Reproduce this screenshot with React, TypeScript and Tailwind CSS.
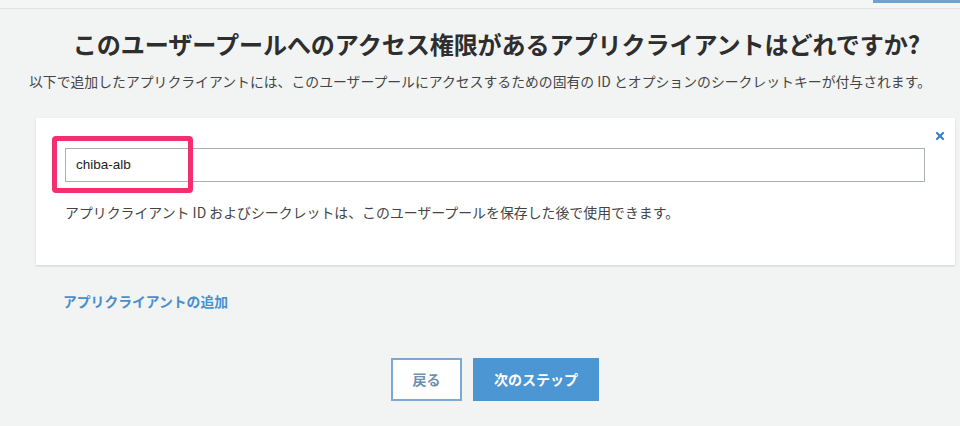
import { X } from 'lucide-react';

const font = { fontFamily: '"Noto Sans CJK JP", "Noto Sans", sans-serif' };

export default function App() {
  return (
    <div
      className="w-[960px] h-[426px] overflow-hidden bg-[#f2f4f4] text-[#333]"
      style={font}
    >
      <div className="relative h-[9px] border-b border-[#dfe3e3] bg-[#f4f6f6]">
        <div className="absolute right-0 top-0 w-[87px] h-[3px] bg-[#6fa2cf] border-x border-[#6fa2cf]" />
      </div>

      <h1 className="mt-[21px] pl-[33px] text-center text-[24.1px] leading-[28px] font-bold text-[#2e2e2e] tracking-[-0.1px]">
        このユーザープールへのアクセス権限があるアプリクライアントはどれですか?
      </h1>
      <p className="mt-[14px] text-center text-[13.85px] leading-[18px] text-[#444]">
        以下で追加したアプリクライアントには、このユーザープールにアクセスするための固有の ID とオプションのシークレットキーが付与されます。
      </p>

      <div className="relative mt-[28px] ml-[36px] mr-[5px] h-[147px] bg-white shadow-[0_1px_2px_rgba(0,0,0,0.15)] pt-[30px] px-[29px]">
        <button className="absolute right-[9px] top-[12px] text-[#3d82c2]">
          <X className="w-[12px] h-[12px]" strokeWidth={4.5} />
        </button>
        <div className="relative mr-[1px] h-[34px] border border-[#aab0b0] flex items-center px-[10px]">
          <span className="text-[13.5px] text-[#222]" style={{ fontFamily: '"Liberation Sans", Arial, sans-serif' }}>
            chiba-alb
          </span>
          <div className="absolute left-[-14px] top-[-13px] w-[141px] h-[57px] border-[5px] border-[#f3306f] rounded-[4px]" />
        </div>
        <p className="mt-[21px] text-[13.9px] leading-[18px] text-[#444]">
          アプリクライアント ID およびシークレットは、このユーザープールを保存した後で使用できます。
        </p>
      </div>

      <div className="mt-[23px] ml-[63px]">
        <a className="text-[13.8px] font-bold text-[#4a8fcb] cursor-pointer">アプリクライアントの追加</a>
      </div>

      <div className="mt-[46px] flex justify-center gap-[11px] pl-[30px]">
        <button className="w-[71px] h-[43px] bg-white border-2 border-[#7aa9d6] text-[14px] font-bold text-[#6f8fae]">
          戻る
        </button>
        <button className="w-[126px] h-[43px] bg-[#4b96d3] text-[14px] font-bold text-white">
          次のステップ
        </button>
      </div>
    </div>
  );
}
